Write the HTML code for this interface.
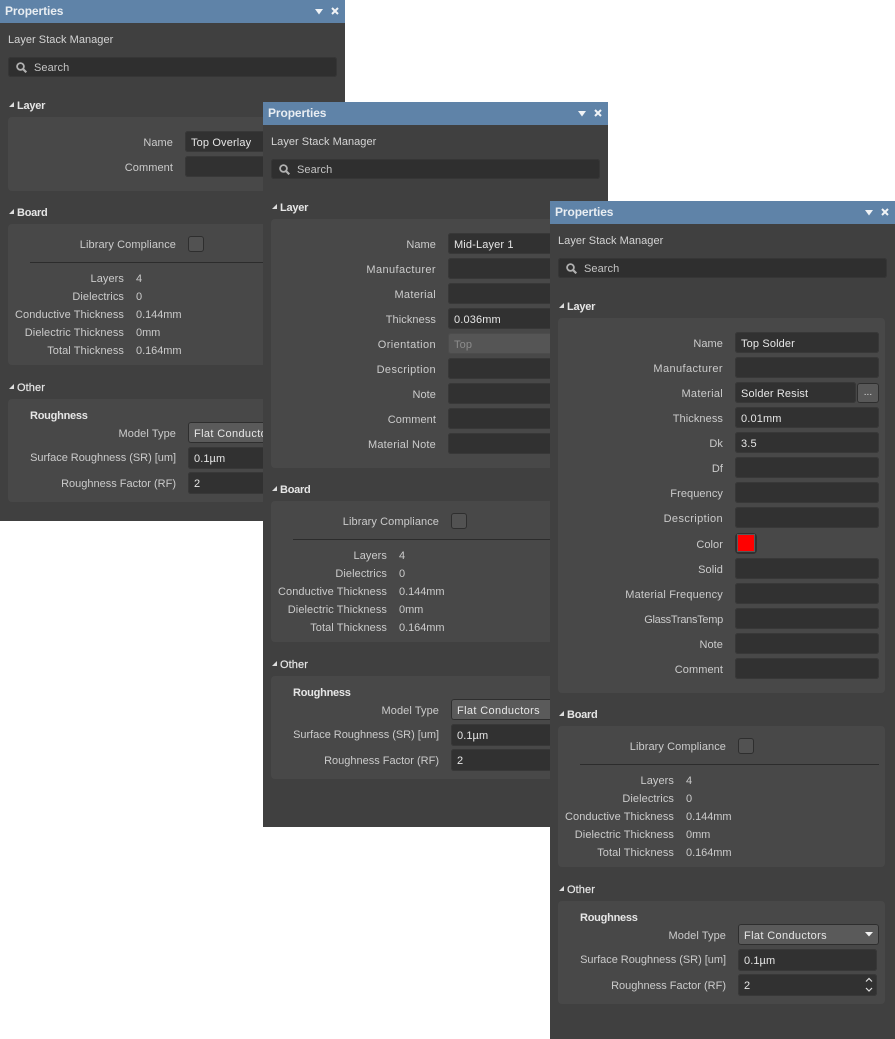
<!DOCTYPE html>
<html><head><meta charset="utf-8">
<style>
html,body{margin:0;padding:0;background:#fff}
body{width:895px;height:1039px;position:relative;overflow:hidden;font:11px/16px "Liberation Sans",sans-serif;letter-spacing:.08px;color:#cfcfcf}
.p{position:absolute;width:345px;background:#404040;overflow:hidden}
.p div,.p svg{position:absolute}
.h{left:0;top:0;width:345px;height:23px;background:#5f83a8}
.t{left:5px;top:3px;font-weight:bold;font-size:12px;color:#e8edf2;letter-spacing:-.1px}
.m{left:8px;top:32px;color:#d4d4d4;letter-spacing:.04px}
.s{left:8px;top:57px;width:329px;height:20px;background:#2f2f2f;border-radius:3px;box-shadow:inset 0 0 0 1px #363636}
.st{left:34px;top:60px;color:#c4c4c4}
.sh{left:17px;font-weight:bold;color:#e6e6e6;letter-spacing:-.25px;margin-top:1px}
.c{left:8px;width:327px;background:#484848;border-radius:4px}
.l{left:0;width:173px;text-align:right;color:#cbcbcb;white-space:nowrap;margin-top:1px}
.i{left:185px;width:144px;height:21px;background:#313131;border-radius:3px;box-shadow:inset 0 0 0 1px #383838}
.v{left:191px;color:#e6e6e6;white-space:nowrap;margin-top:1px;letter-spacing:.14px}
.g{left:0;width:345px;height:310px}
.r{left:0;width:176px;text-align:right;color:#cbcbcb;white-space:nowrap;margin-top:1px}
.k{left:0;width:124px;text-align:right;color:#cbcbcb;white-space:nowrap;margin-top:1px}
.n{left:136px;color:#cbcbcb;margin-top:1px;letter-spacing:-.05px}
.cb{left:188px;top:24px;width:14px;height:14px;background:#525252;border:1px solid #2e2e2e;border-radius:3px}
.ln{left:30px;top:50px;width:299px;height:1px;background:#2c2c2c}
.dd{left:188px;top:210px;width:141px;height:21px;background:#5a5a5a;border-radius:3px;box-shadow:inset 0 0 0 1px #2e2e2e}
.in{left:188px;width:139px;height:22px;background:#313131;border-radius:3px;box-shadow:inset 0 0 0 1px #383838}
.x{left:194px;color:#e6e6e6;white-space:nowrap;margin-top:1px}
.fc{letter-spacing:.36px}
.w{letter-spacing:.4px}
.rg{left:30px;top:195px;font-weight:bold;color:#e6e6e6;letter-spacing:-.25px;margin-top:1px}
</style></head><body>

<div class="p" style="left:0;top:0;height:521px">
<div class="h"></div><div class="t">Properties</div>
<svg style="left:315px;top:9px" width="8" height="6"><path d="M0 0H8L4 5.5Z" fill="#f0f3f6"/></svg>
<svg style="left:331px;top:7px" width="8" height="8"><path d="M1 1L7 7M7 1L1 7" stroke="#f0f3f6" stroke-width="2"/></svg>
<div class="m">Layer Stack Manager</div>
<div class="s"></div>
<svg style="left:16px;top:62px" width="11" height="11"><circle cx="4.5" cy="4.5" r="3.4" fill="none" stroke="#b0b0b0" stroke-width="1.8"/><path d="M7 7L10.3 10.3" stroke="#b0b0b0" stroke-width="2.2"/></svg>
<div class="st">Search</div>
<svg style="left:9px;top:102px" width="5" height="5"><path d="M5 0V5H0Z" fill="#ddd"/></svg>
<div class="sh" style="top:97px">Layer</div>
<div class="c" style="top:117px;height:74px"></div>
<div class="l" style="top:134px">Name</div><div class="i" style="top:131px"></div><div class="v" style="top:134px">Top Overlay</div>
<div class="l" style="top:159px">Comment</div><div class="i" style="top:156px"></div>
<div class="g" style="top:212px">
<svg style="left:9px;top:-3px" width="5" height="5"><path d="M5 0V5H0Z" fill="#ddd"/></svg>
<div class="sh" style="top:-8px">Board</div>
<div class="c" style="top:12px;height:141px"></div>
<div class="r" style="top:24px">Library Compliance</div><div class="cb"></div><div class="ln"></div>
<div class="k" style="top:58px">Layers</div><div class="n" style="top:58px">4</div>
<div class="k" style="top:76px">Dielectrics</div><div class="n" style="top:76px">0</div>
<div class="k" style="top:94px">Conductive Thickness</div><div class="n" style="top:94px">0.144mm</div>
<div class="k" style="top:112px">Dielectric Thickness</div><div class="n" style="top:112px">0mm</div>
<div class="k" style="top:130px">Total Thickness</div><div class="n" style="top:130px">0.164mm</div>
<svg style="left:9px;top:172px" width="5" height="5"><path d="M5 0V5H0Z" fill="#ddd"/></svg>
<div class="sh" style="top:167px;font-weight:normal;letter-spacing:.1px;-webkit-text-stroke:.2px #e6e6e6">Other</div>
<div class="c" style="top:187px;height:103px"></div>
<div class="rg">Roughness</div>
<div class="r" style="top:213px">Model Type</div><div class="dd"></div><div class="x fc" style="top:213px">Flat Conductors</div>
<div class="r" style="top:237px;letter-spacing:-.03px">Surface Roughness (SR) [um]</div><div class="in" style="top:235px"></div><div class="x" style="top:238px">0.1µm</div>
<div class="r" style="top:263px;letter-spacing:0">Roughness Factor (RF)</div><div class="in" style="top:260px"></div><div class="x" style="top:263px">2</div>
</div>
</div>

<div class="p" style="left:263px;top:102px;height:725px">
<div class="h"></div><div class="t">Properties</div>
<svg style="left:315px;top:9px" width="8" height="6"><path d="M0 0H8L4 5.5Z" fill="#f0f3f6"/></svg>
<svg style="left:331px;top:7px" width="8" height="8"><path d="M1 1L7 7M7 1L1 7" stroke="#f0f3f6" stroke-width="2"/></svg>
<div class="m">Layer Stack Manager</div>
<div class="s"></div>
<svg style="left:16px;top:62px" width="11" height="11"><circle cx="4.5" cy="4.5" r="3.4" fill="none" stroke="#b0b0b0" stroke-width="1.8"/><path d="M7 7L10.3 10.3" stroke="#b0b0b0" stroke-width="2.2"/></svg>
<div class="st">Search</div>
<svg style="left:9px;top:102px" width="5" height="5"><path d="M5 0V5H0Z" fill="#ddd"/></svg>
<div class="sh" style="top:97px">Layer</div>
<div class="c" style="top:117px;height:249px"></div>
<div class="l" style="top:134px">Name</div><div class="i" style="top:131px"></div><div class="v" style="top:134px">Mid-Layer 1</div>
<div class="l w" style="top:159px">Manufacturer</div><div class="i" style="top:156px"></div>
<div class="l" style="top:184px;letter-spacing:.3px">Material</div><div class="i" style="top:181px"></div>
<div class="l" style="top:209px">Thickness</div><div class="i" style="top:206px"></div><div class="v" style="top:209px">0.036mm</div>
<div class="l w" style="top:234px">Orientation</div><div class="i" style="top:231px;background:#555;box-shadow:inset 0 0 0 1px #4c4c4c"></div><div class="v" style="top:234px;color:#8c8c8c">Top</div>
<div class="l w" style="top:259px">Description</div><div class="i" style="top:256px"></div>
<div class="l" style="top:284px">Note</div><div class="i" style="top:281px"></div>
<div class="l" style="top:309px">Comment</div><div class="i" style="top:306px"></div>
<div class="l" style="top:334px;letter-spacing:.2px">Material Note</div><div class="i" style="top:331px"></div>
<div class="g" style="top:387px">
<svg style="left:9px;top:-3px" width="5" height="5"><path d="M5 0V5H0Z" fill="#ddd"/></svg>
<div class="sh" style="top:-8px">Board</div>
<div class="c" style="top:12px;height:141px"></div>
<div class="r" style="top:24px">Library Compliance</div><div class="cb"></div><div class="ln"></div>
<div class="k" style="top:58px">Layers</div><div class="n" style="top:58px">4</div>
<div class="k" style="top:76px">Dielectrics</div><div class="n" style="top:76px">0</div>
<div class="k" style="top:94px">Conductive Thickness</div><div class="n" style="top:94px">0.144mm</div>
<div class="k" style="top:112px">Dielectric Thickness</div><div class="n" style="top:112px">0mm</div>
<div class="k" style="top:130px">Total Thickness</div><div class="n" style="top:130px">0.164mm</div>
<svg style="left:9px;top:172px" width="5" height="5"><path d="M5 0V5H0Z" fill="#ddd"/></svg>
<div class="sh" style="top:167px;font-weight:normal;letter-spacing:.1px;-webkit-text-stroke:.2px #e6e6e6">Other</div>
<div class="c" style="top:187px;height:103px"></div>
<div class="rg">Roughness</div>
<div class="r" style="top:213px">Model Type</div><div class="dd"></div><div class="x fc" style="top:213px">Flat Conductors</div>
<div class="r" style="top:237px;letter-spacing:-.03px">Surface Roughness (SR) [um]</div><div class="in" style="top:235px"></div><div class="x" style="top:238px">0.1µm</div>
<div class="r" style="top:263px;letter-spacing:0">Roughness Factor (RF)</div><div class="in" style="top:260px"></div><div class="x" style="top:263px">2</div>
</div>
</div>

<div class="p" style="left:550px;top:201px;height:838px">
<div class="h"></div><div class="t">Properties</div>
<svg style="left:315px;top:9px" width="8" height="6"><path d="M0 0H8L4 5.5Z" fill="#f0f3f6"/></svg>
<svg style="left:331px;top:7px" width="8" height="8"><path d="M1 1L7 7M7 1L1 7" stroke="#f0f3f6" stroke-width="2"/></svg>
<div class="m">Layer Stack Manager</div>
<div class="s"></div>
<svg style="left:16px;top:62px" width="11" height="11"><circle cx="4.5" cy="4.5" r="3.4" fill="none" stroke="#b0b0b0" stroke-width="1.8"/><path d="M7 7L10.3 10.3" stroke="#b0b0b0" stroke-width="2.2"/></svg>
<div class="st">Search</div>
<svg style="left:9px;top:102px" width="5" height="5"><path d="M5 0V5H0Z" fill="#ddd"/></svg>
<div class="sh" style="top:97px">Layer</div>
<div class="c" style="top:117px;height:375px"></div>
<div class="l" style="top:134px">Name</div><div class="i" style="top:131px"></div><div class="v" style="top:134px">Top Solder</div>
<div class="l w" style="top:159px">Manufacturer</div><div class="i" style="top:156px"></div>
<div class="l" style="top:184px;letter-spacing:.3px">Material</div><div class="i" style="top:181px;width:121px"></div><div class="v" style="top:184px">Solder Resist</div>
<div style="left:307px;top:182px;width:22px;height:20px;background:#585858;border-radius:3px;box-shadow:inset 0 0 0 1px #2e2e2e;text-align:center;line-height:20px;font-size:10px;color:#ddd">...</div>
<div class="l" style="top:209px">Thickness</div><div class="i" style="top:206px"></div><div class="v" style="top:209px">0.01mm</div>
<div class="l" style="top:234px">Dk</div><div class="i" style="top:231px"></div><div class="v" style="top:234px">3.5</div>
<div class="l" style="top:259px">Df</div><div class="i" style="top:256px"></div>
<div class="l" style="top:284px">Frequency</div><div class="i" style="top:281px"></div>
<div class="l w" style="top:309px">Description</div><div class="i" style="top:306px"></div>
<div class="l" style="top:335px">Color</div>
<div style="left:185px;top:332px;width:22px;height:21px;background:#313131;border-radius:4px"></div>
<div style="left:188px;top:334px;width:16px;height:16px;background:#f00;box-shadow:0 0 0 1px #5a5a5a"></div>
<div class="l" style="top:360px">Solid</div><div class="i" style="top:357px"></div>
<div class="l" style="top:385px;letter-spacing:.2px">Material Frequency</div><div class="i" style="top:382px"></div>
<div class="l" style="top:410px;letter-spacing:-.28px">GlassTransTemp</div><div class="i" style="top:407px"></div>
<div class="l" style="top:435px">Note</div><div class="i" style="top:432px"></div>
<div class="l" style="top:460px">Comment</div><div class="i" style="top:457px"></div>
<div class="g" style="top:513px">
<svg style="left:9px;top:-3px" width="5" height="5"><path d="M5 0V5H0Z" fill="#ddd"/></svg>
<div class="sh" style="top:-8px">Board</div>
<div class="c" style="top:12px;height:141px"></div>
<div class="r" style="top:24px">Library Compliance</div><div class="cb"></div><div class="ln"></div>
<div class="k" style="top:58px">Layers</div><div class="n" style="top:58px">4</div>
<div class="k" style="top:76px">Dielectrics</div><div class="n" style="top:76px">0</div>
<div class="k" style="top:94px">Conductive Thickness</div><div class="n" style="top:94px">0.144mm</div>
<div class="k" style="top:112px">Dielectric Thickness</div><div class="n" style="top:112px">0mm</div>
<div class="k" style="top:130px">Total Thickness</div><div class="n" style="top:130px">0.164mm</div>
<svg style="left:9px;top:172px" width="5" height="5"><path d="M5 0V5H0Z" fill="#ddd"/></svg>
<div class="sh" style="top:167px;font-weight:normal;letter-spacing:.1px;-webkit-text-stroke:.2px #e6e6e6">Other</div>
<div class="c" style="top:187px;height:103px"></div>
<div class="rg">Roughness</div>
<div class="r" style="top:213px">Model Type</div><div class="dd"></div><div class="x fc" style="top:213px">Flat Conductors</div>
<svg style="left:315px;top:218px" width="8" height="5"><path d="M0 0H8L4 4.5Z" fill="#f2f2f2"/></svg>
<div class="r" style="top:237px;letter-spacing:-.03px">Surface Roughness (SR) [um]</div><div class="in" style="top:235px"></div><div class="x" style="top:238px">0.1µm</div>
<div class="r" style="top:263px;letter-spacing:0">Roughness Factor (RF)</div><div class="in" style="top:260px"></div><div class="x" style="top:263px">2</div>
<svg style="left:315px;top:263px" width="8" height="16"><path d="M1 4.5L4 1.5L7 4.5M1 11L4 14L7 11" fill="none" stroke="#e0e0e0" stroke-width="1.2"/></svg>
</div>
</div>

</body></html>
